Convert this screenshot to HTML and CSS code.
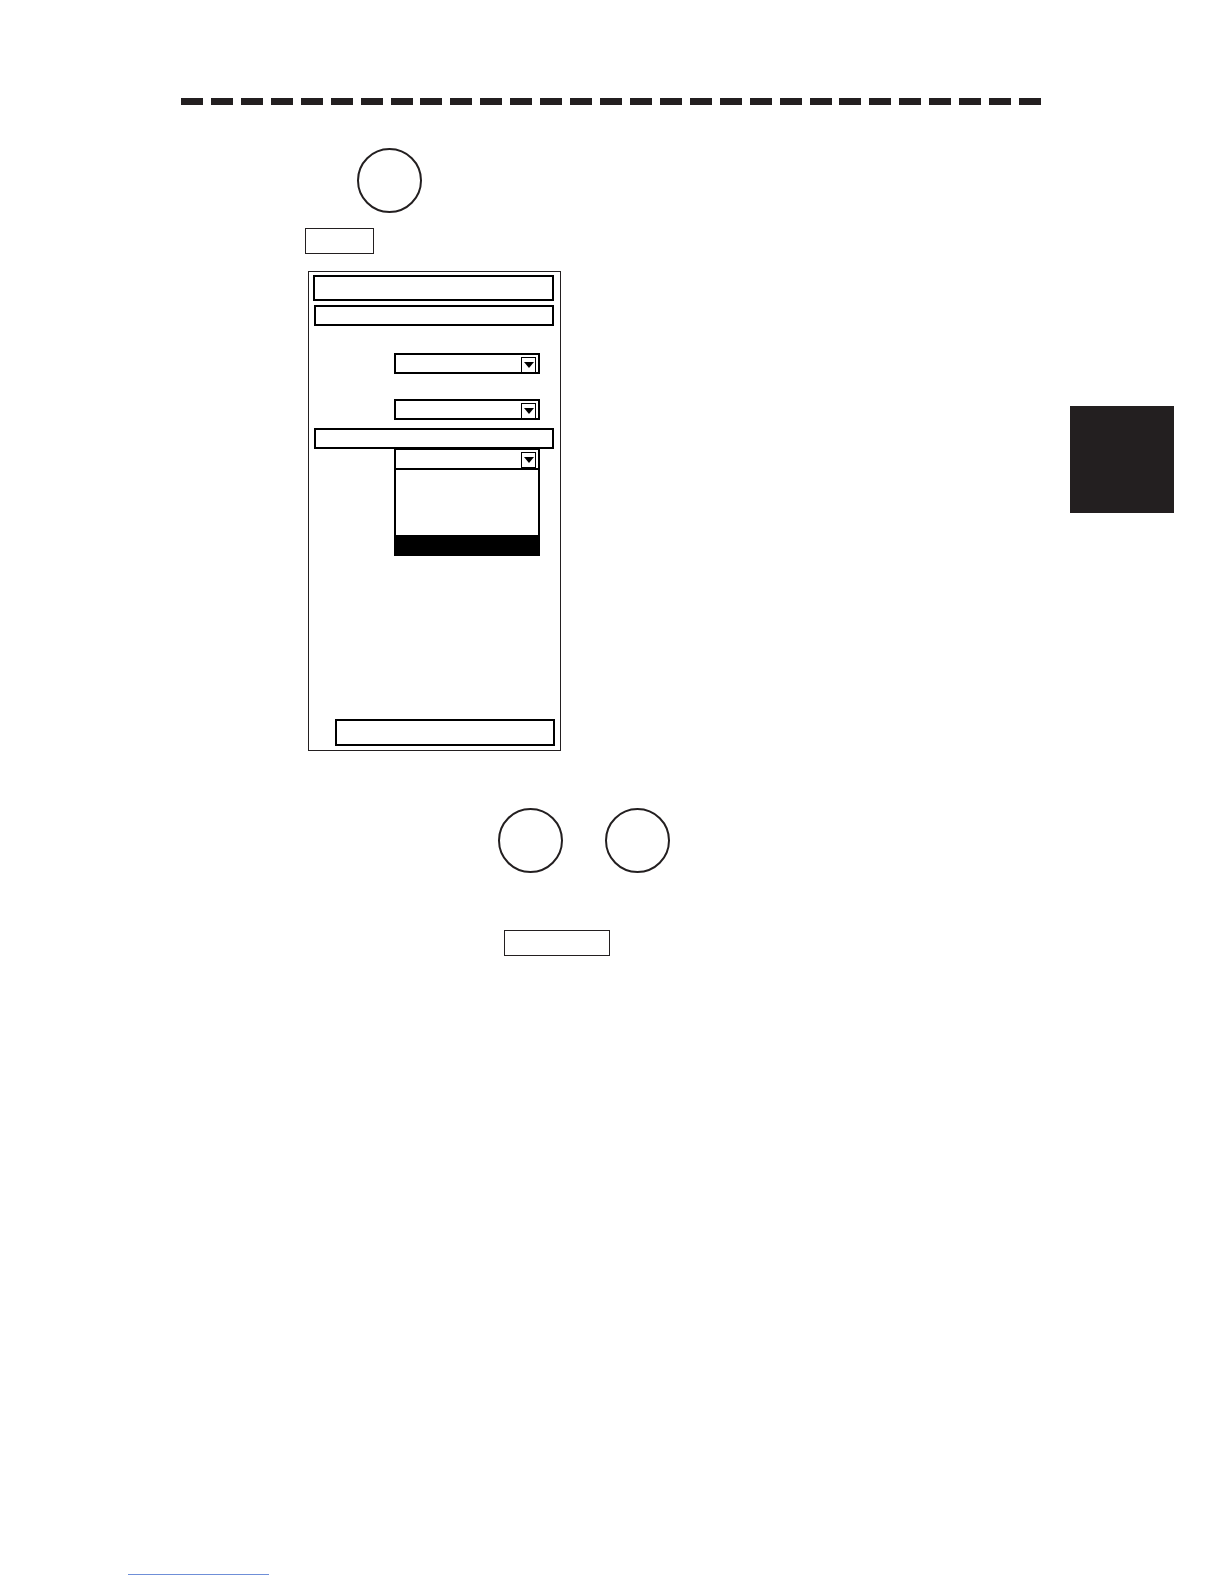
FILE: index.html
```html
<!DOCTYPE html>
<html lang="en">
<head>
<meta charset="utf-8">
<title>Manual page</title>
<link rel="stylesheet" href="styles.css">
</head>
<body>
<div class="page">
  <div class="main">
    <div class="rule"></div>
    <div class="circle circle-step1"></div>
    <div class="key key-menu"></div>
    <div class="dialog">
      <div class="dlg-title"></div>
      <div class="dlg-section"></div>
      <div class="combo combo-1"><span class="arrow"></span></div>
      <div class="combo combo-2"><span class="arrow"></span></div>
      <div class="dlg-section dlg-section-2"></div>
      <div class="combo-open">
        <div class="combo combo-3"><span class="arrow"></span></div>
        <div class="combo-list">
          <div class="combo-item"></div>
          <div class="combo-item"></div>
          <div class="combo-item"></div>
          <div class="combo-item selected"></div>
        </div>
      </div>
      <div class="dlg-button"></div>
    </div>
    <div class="circle-row">
      <div class="circle"></div>
      <div class="circle"></div>
    </div>
    <div class="key key-enter"></div>
    <div class="footer-line"></div>
  </div>
  <div class="tab"></div>
</div>
</body>
</html>
```

FILE: styles.css
```css
html, body {
  margin: 0;
  padding: 0;
  background: #ffffff;
  font-family: "Liberation Sans", Arial, sans-serif;
}

.page {
  width: 1224px;
  height: 1584px;
  display: flex;
  overflow: hidden;
}

.main {
  width: 1070px;
  display: flex;
  flex-direction: column;
  align-items: flex-start;
}

.rule {
  margin-top: 98px;
  margin-left: 181px;
  width: 861px;
  height: 7px;
  background: repeating-linear-gradient(to right, #231f20 0 22px, transparent 22px 29.93px);
}

.circle {
  width: 65px;
  height: 65px;
  box-sizing: border-box;
  border: 2px solid #231f20;
  border-radius: 50%;
}

.circle-step1 {
  margin-top: 43px;
  margin-left: 357px;
}

.key {
  box-sizing: border-box;
  border: 1.5px solid #231f20;
  height: 26px;
}

.key-menu {
  margin-top: 15px;
  margin-left: 305px;
  width: 69px;
}

.dialog {
  margin-top: 17px;
  margin-left: 308px;
  width: 253px;
  height: 480px;
  box-sizing: border-box;
  border: 1.5px solid #231f20;
  display: flex;
  flex-direction: column;
  align-items: flex-start;
}

.dlg-title {
  margin-top: 3px;
  margin-left: 4px;
  width: 241px;
  height: 26px;
  box-sizing: border-box;
  border: 2px solid #000;
}

.dlg-section {
  margin-top: 4px;
  margin-left: 5px;
  width: 240px;
  height: 21px;
  box-sizing: border-box;
  border: 2px solid #000;
}

.dlg-section-2 {
  margin-top: 8px;
}

.combo {
  margin-left: 85px;
  width: 146px;
  height: 21px;
  box-sizing: border-box;
  border: 2px solid #000;
  display: flex;
  justify-content: flex-end;
  align-items: center;
  padding-right: 2px;
  background: #fff;
}

.combo-1 {
  margin-top: 27px;
}

.combo-2 {
  margin-top: 25px;
}

.arrow {
  width: 15px;
  height: 16px;
  margin-top: 2px;
  box-sizing: border-box;
  border: 1.5px solid #000;
  display: flex;
  align-items: center;
  justify-content: center;
}

.arrow::before {
  content: "";
  width: 0;
  height: 0;
  border-left: 5px solid transparent;
  border-right: 5px solid transparent;
  border-top: 6px solid #000;
}

.combo-open {
  margin-top: -1px;
  display: flex;
  flex-direction: column;
}

.combo-3 {
  margin-left: 85px;
  height: 22px;
}

.combo-list {
  margin-left: 85px;
  width: 146px;
  box-sizing: border-box;
  border-left: 2px solid #000;
  border-right: 2px solid #000;
  display: flex;
  flex-direction: column;
}

.combo-item {
  height: 21.5px;
}

.combo-item:first-child {
  height: 22px;
}

.combo-item.selected {
  height: 21px;
  background: #000;
}

.dlg-button {
  margin-top: auto;
  margin-bottom: 4px;
  margin-left: 26px;
  width: 220px;
  height: 27px;
  box-sizing: border-box;
  border: 2px solid #000;
}

.circle-row {
  margin-top: 57px;
  margin-left: 498px;
  display: flex;
  gap: 42px;
}

.key-enter {
  margin-top: 57px;
  margin-left: 504px;
  width: 106px;
}

.footer-line {
  margin-top: 618px;
  margin-left: 128px;
  width: 141px;
  height: 1px;
  background: #6f8fd8;
}

.tab {
  margin-top: 406px;
  width: 104px;
  height: 107px;
  background: #231f20;
}
```
